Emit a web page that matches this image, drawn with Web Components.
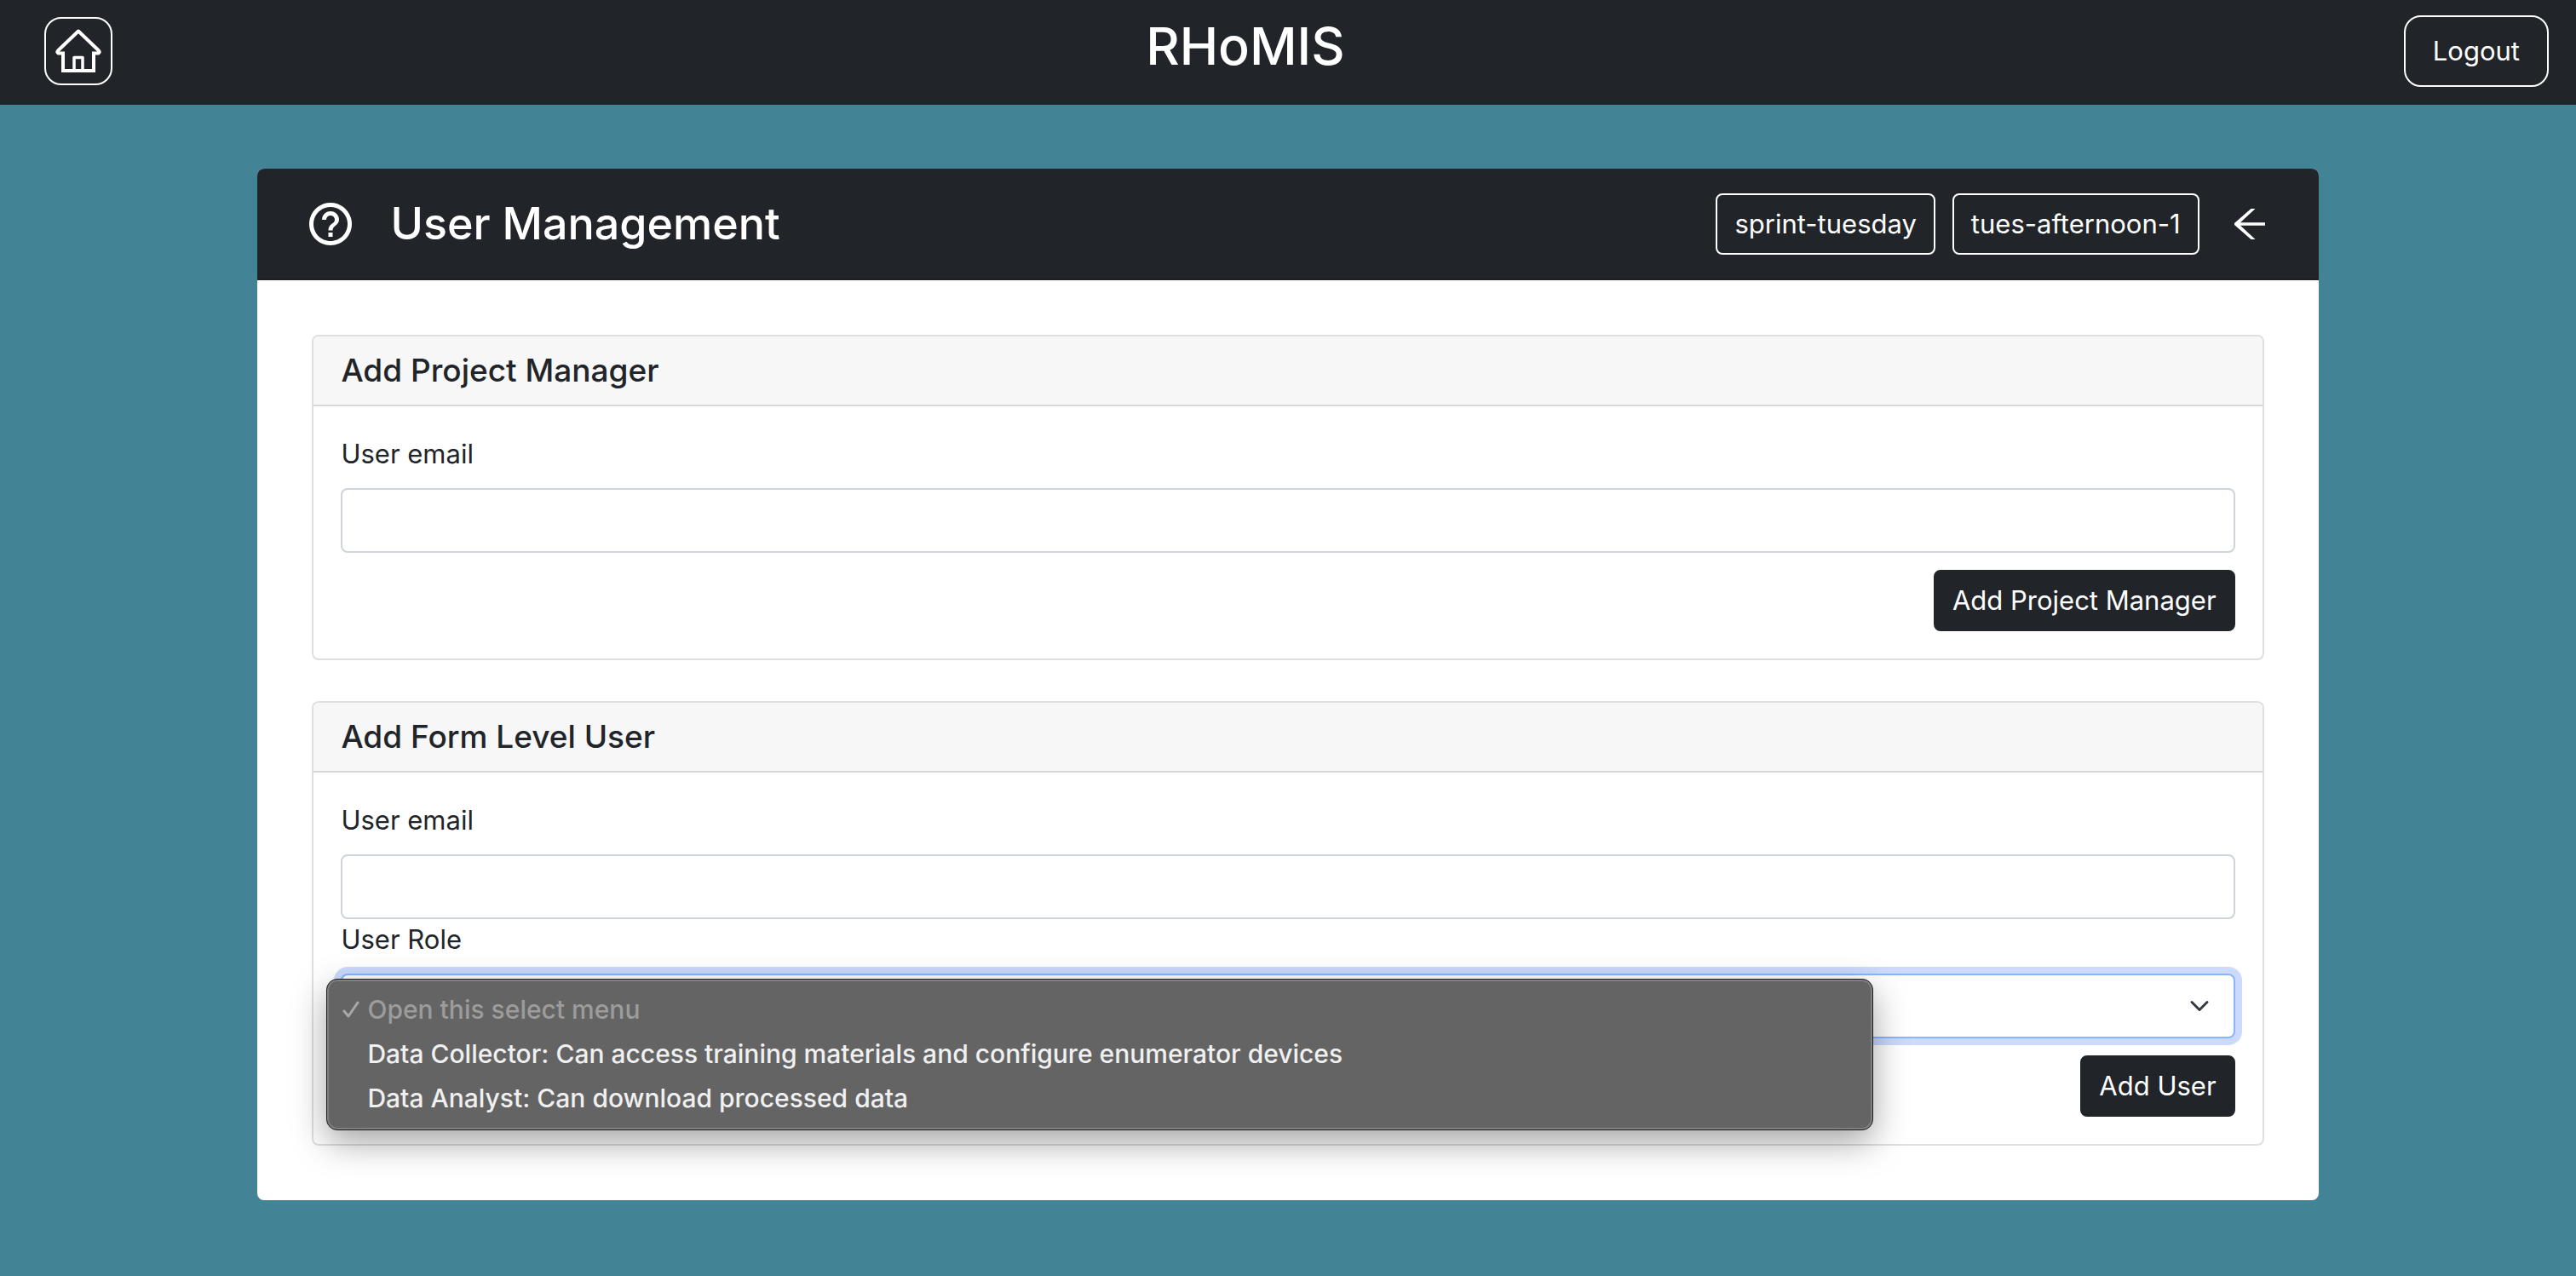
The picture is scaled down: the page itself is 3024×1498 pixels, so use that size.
<!DOCTYPE html>
<html lang="en">
<head>
<meta charset="utf-8">
<title>RHoMIS</title>
<style>
  :root {
    --dark: #212529;
    --teal: #428495;
    --line: #dfdfdf;
  }
  body {
    margin: 0;
    min-height: 100vh;
    background: var(--teal);
    color: var(--dark);
    font: 400 31px/48px Inter, "Liberation Sans", sans-serif;
  }
</style>
</head>
<body>
<rh-navbar>RHoMIS</rh-navbar>
<main>
  <rh-page heading="User Management">
    <rh-button slot="tools" variant="outline">sprint-tuesday</rh-button>
    <rh-button slot="tools" variant="outline">tues-afternoon-1</rh-button>
    <rh-card heading="Add Project Manager">
      <rh-text-field label="User email"></rh-text-field>
      <rh-button slot="actions">Add Project Manager</rh-button>
    </rh-card>
    <rh-card heading="Add Form Level User">
      <rh-text-field label="User email"></rh-text-field>
      <rh-select-field label="User Role">
        <option disabled selected>Open this select menu</option>
        <option>Data Collector: Can access training materials and configure enumerator devices</option>
        <option>Data Analyst: Can download processed data</option>
      </rh-select-field>
      <rh-button slot="actions">Add User</rh-button>
    </rh-card>
  </rh-page>
</main>
<script>
  const base = `
    *, *::before, *::after { box-sizing: border-box; }
    h1, h2, h3 { margin: 0; font-weight: 500; }
    button, input, select { font: inherit; color: inherit; margin: 0; }
    svg { display: block; }
  `;

  class Base extends HTMLElement {
    connectedCallback() {
      if (this.shadowRoot) return;
      const root = this.attachShadow({ mode: 'open' });
      root.innerHTML = `<style>${base}${this.styles()}</style>${this.markup()}`;
    }
  }

  customElements.define('rh-navbar', class extends Base {
    styles() { return `
      :host { display: block; background: var(--dark); color: #fff; }
      header { display: flex; align-items: center; padding: 18px 32px 21px 52px; }
      h1 { flex: 1; padding: 0 30px 13px 0; text-align: center; font-size: 61px; line-height: 64px; }
      .home { display: flex; align-items: center; justify-content: center; width: 80px; height: 80px; border: 2px solid #fff; border-radius: 20px; }
      button { height: 84px; padding: 0 32px; border: 2px solid #fff; border-radius: 20px; background: none; color: #fff; }
    `; }
    markup() { return `
      <header>
        <a class="home" href="#" aria-label="Home">
          <svg width="56" height="56" viewBox="0 -2 56 56" fill="none" stroke="#fff" stroke-width="4" stroke-linejoin="round">
            <path stroke-linejoin="miter" d="M10 30V49H46V30"/>
            <path d="M12 28.500H4.500Q2 27 4.500 25L28 2.500L51.500 25Q54 27 51.500 28.500H44"/>
            <path stroke-width="3.500" d="M23 49V33.500H33V49"/>
          </svg>
        </a>
        <h1><slot></slot></h1>
        <button type="button">Logout</button>
      </header>`; }
  });

  customElements.define('rh-button', class extends Base {
    styles() { return `
      :host { display: block; }
      button { display: block; height: 72px; padding: 0 20px; border: 2px solid var(--dark); border-radius: 8px; background: var(--dark); color: #fff; white-space: nowrap; }
      :host([variant="outline"]) button { border-color: #fff; }
    `; }
    markup() { return `<button type="button"><slot></slot></button>`; }
  });

  customElements.define('rh-page', class extends Base {
    styles() { return `
      :host { display: block; width: 80%; margin: 75px auto; border-radius: 8px; background: #fff; }
      header { display: flex; align-items: center; padding: 29px 63px 28px 56px; border-bottom: 2px solid #1d2024; border-radius: 8px 8px 0 0; background: var(--dark); color: #fff; }
      h2 { flex: 1; margin-left: 40px; font-size: 52px; line-height: 64px; }
      .tools { display: flex; gap: 20px; margin-right: 41px; }
      a { display: block; }
      .body { display: flex; flex-direction: column; gap: 48px; padding: 64px; }
    `; }
    markup() { return `
      <header>
        <svg width="60" height="60" viewBox="0 0 24 24" fill="#fff" aria-hidden="true">
          <path d="M11 18h2v-2h-2v2zm1-16C6.480 2 2 6.480 2 12s4.480 10 10 10 10-4.480 10-10S17.520 2 12 2zm0 18c-4.410 0-8-3.590-8-8s3.590-8 8-8 8 3.590 8 8-3.590 8-8 8zm0-14c-2.210 0-4 1.790-4 4h2c0-1.100.9-2 2-2s2 .9 2 2c0 2-3 1.750-3 5h2c0-2.250 3-2.500 3-5 0-2.210-1.790-4-4-4z"/>
        </svg>
        <h2>${this.getAttribute('heading')}</h2>
        <div class="tools"><slot name="tools"></slot></div>
        <a href="#" aria-label="Back">
          <svg width="36" height="36" viewBox="0 0 36 36" fill="#fff">
            <path d="M0 17L19.500 0H24.500L7 16.200H36V19.800H7L24.500 36H19.500L0 19Z"/>
          </svg>
        </a>
      </header>
      <div class="body"><slot></slot></div>`; }
  });

  customElements.define('rh-card', class extends Base {
    styles() { return `
      :host { display: block; border: 2px solid var(--line); border-radius: 8px; }
      h3 { padding: 16px 32px; border-bottom: 2px solid #d8d8d8; border-radius: 6px 6px 0 0; background: #f7f7f7; font-size: 37px; line-height: 48px; }
      form { padding: 32px; }
      .actions { display: flex; justify-content: flex-end; margin-top: 20px; }
    `; }
    markup() { return `
      <section>
        <h3>${this.getAttribute('heading')}</h3>
        <form>
          <slot></slot>
          <div class="actions"><slot name="actions"></slot></div>
        </form>
      </section>`; }
  });

  const field = `
    :host { display: block; }
    label { display: block; margin-bottom: 16px; }
    input, select { display: block; width: 100%; height: 76px; padding: 0 24px; border: 2px solid #ced4da; border-radius: 8px; background: #fff; outline: 0; }
  `;

  customElements.define('rh-text-field', class extends Base {
    styles() { return field; }
    markup() { return `
      <label for="control">${this.getAttribute('label')}</label>
      <input id="control" type="email">`; }
  });

  customElements.define('rh-select-field', class extends Base {
    styles() { return `${field}
      .control { position: relative; }
      select { appearance: none; border-color: #86b7fe; box-shadow: 0 0 0 8px #cbdafd; }
      .chevron { position: absolute; right: 30px; top: 26px; pointer-events: none; }
      ul {
        position: absolute; left: -17px; top: 6px; width: 1816px; max-width: 82%;
        margin: 0; padding: 9px 0 11px; list-style: none;
        border: 1px solid #1c1c1c; border-radius: 13px; background: #646464;
        box-shadow: inset 0 0 0 2px #808080, 0 14px 40px rgba(0, 0, 0, .36);
        color: #f0f0f0; font-size: 30px; font-weight: 500; line-height: 52px;
      }
      li { display: flex; align-items: center; gap: 9px; padding-left: 18px; white-space: nowrap; }
      li::before { content: ""; width: 20px; }
      li.chosen::before { display: none; }
      li.disabled { color: #9c9c9c; }
    `; }
    markup() {
      const options = [...this.querySelectorAll('option')];
      const tick = `<svg width="20" height="20" viewBox="0 0 20 20" fill="none" stroke="#a8a8a8" stroke-width="3" stroke-linecap="round" stroke-linejoin="round" aria-hidden="true"><path d="M2 12L7 18L18 2"/></svg>`;
      const rows = options.map(o => {
        const chosen = o.hasAttribute('selected');
        return `<li role="option" aria-selected="${chosen}" class="${chosen ? 'chosen' : ''} ${o.disabled ? 'disabled' : ''}">${chosen ? tick : ''}${o.textContent}</li>`;
      });
      return `
      <label for="control">${this.getAttribute('label')}</label>
      <div class="control">
        <select id="control">${options.map(o => o.outerHTML).join('')}</select>
        <svg class="chevron" width="24" height="24" viewBox="0 0 16 16" fill="none" stroke="#343a40" stroke-width="2" stroke-linecap="round" stroke-linejoin="round" aria-hidden="true"><path d="M2 5l6 6 6-6"/></svg>
        <ul role="listbox">${rows.join('')}</ul>
      </div>`;
    }
  });
</script>
</body>
</html>
